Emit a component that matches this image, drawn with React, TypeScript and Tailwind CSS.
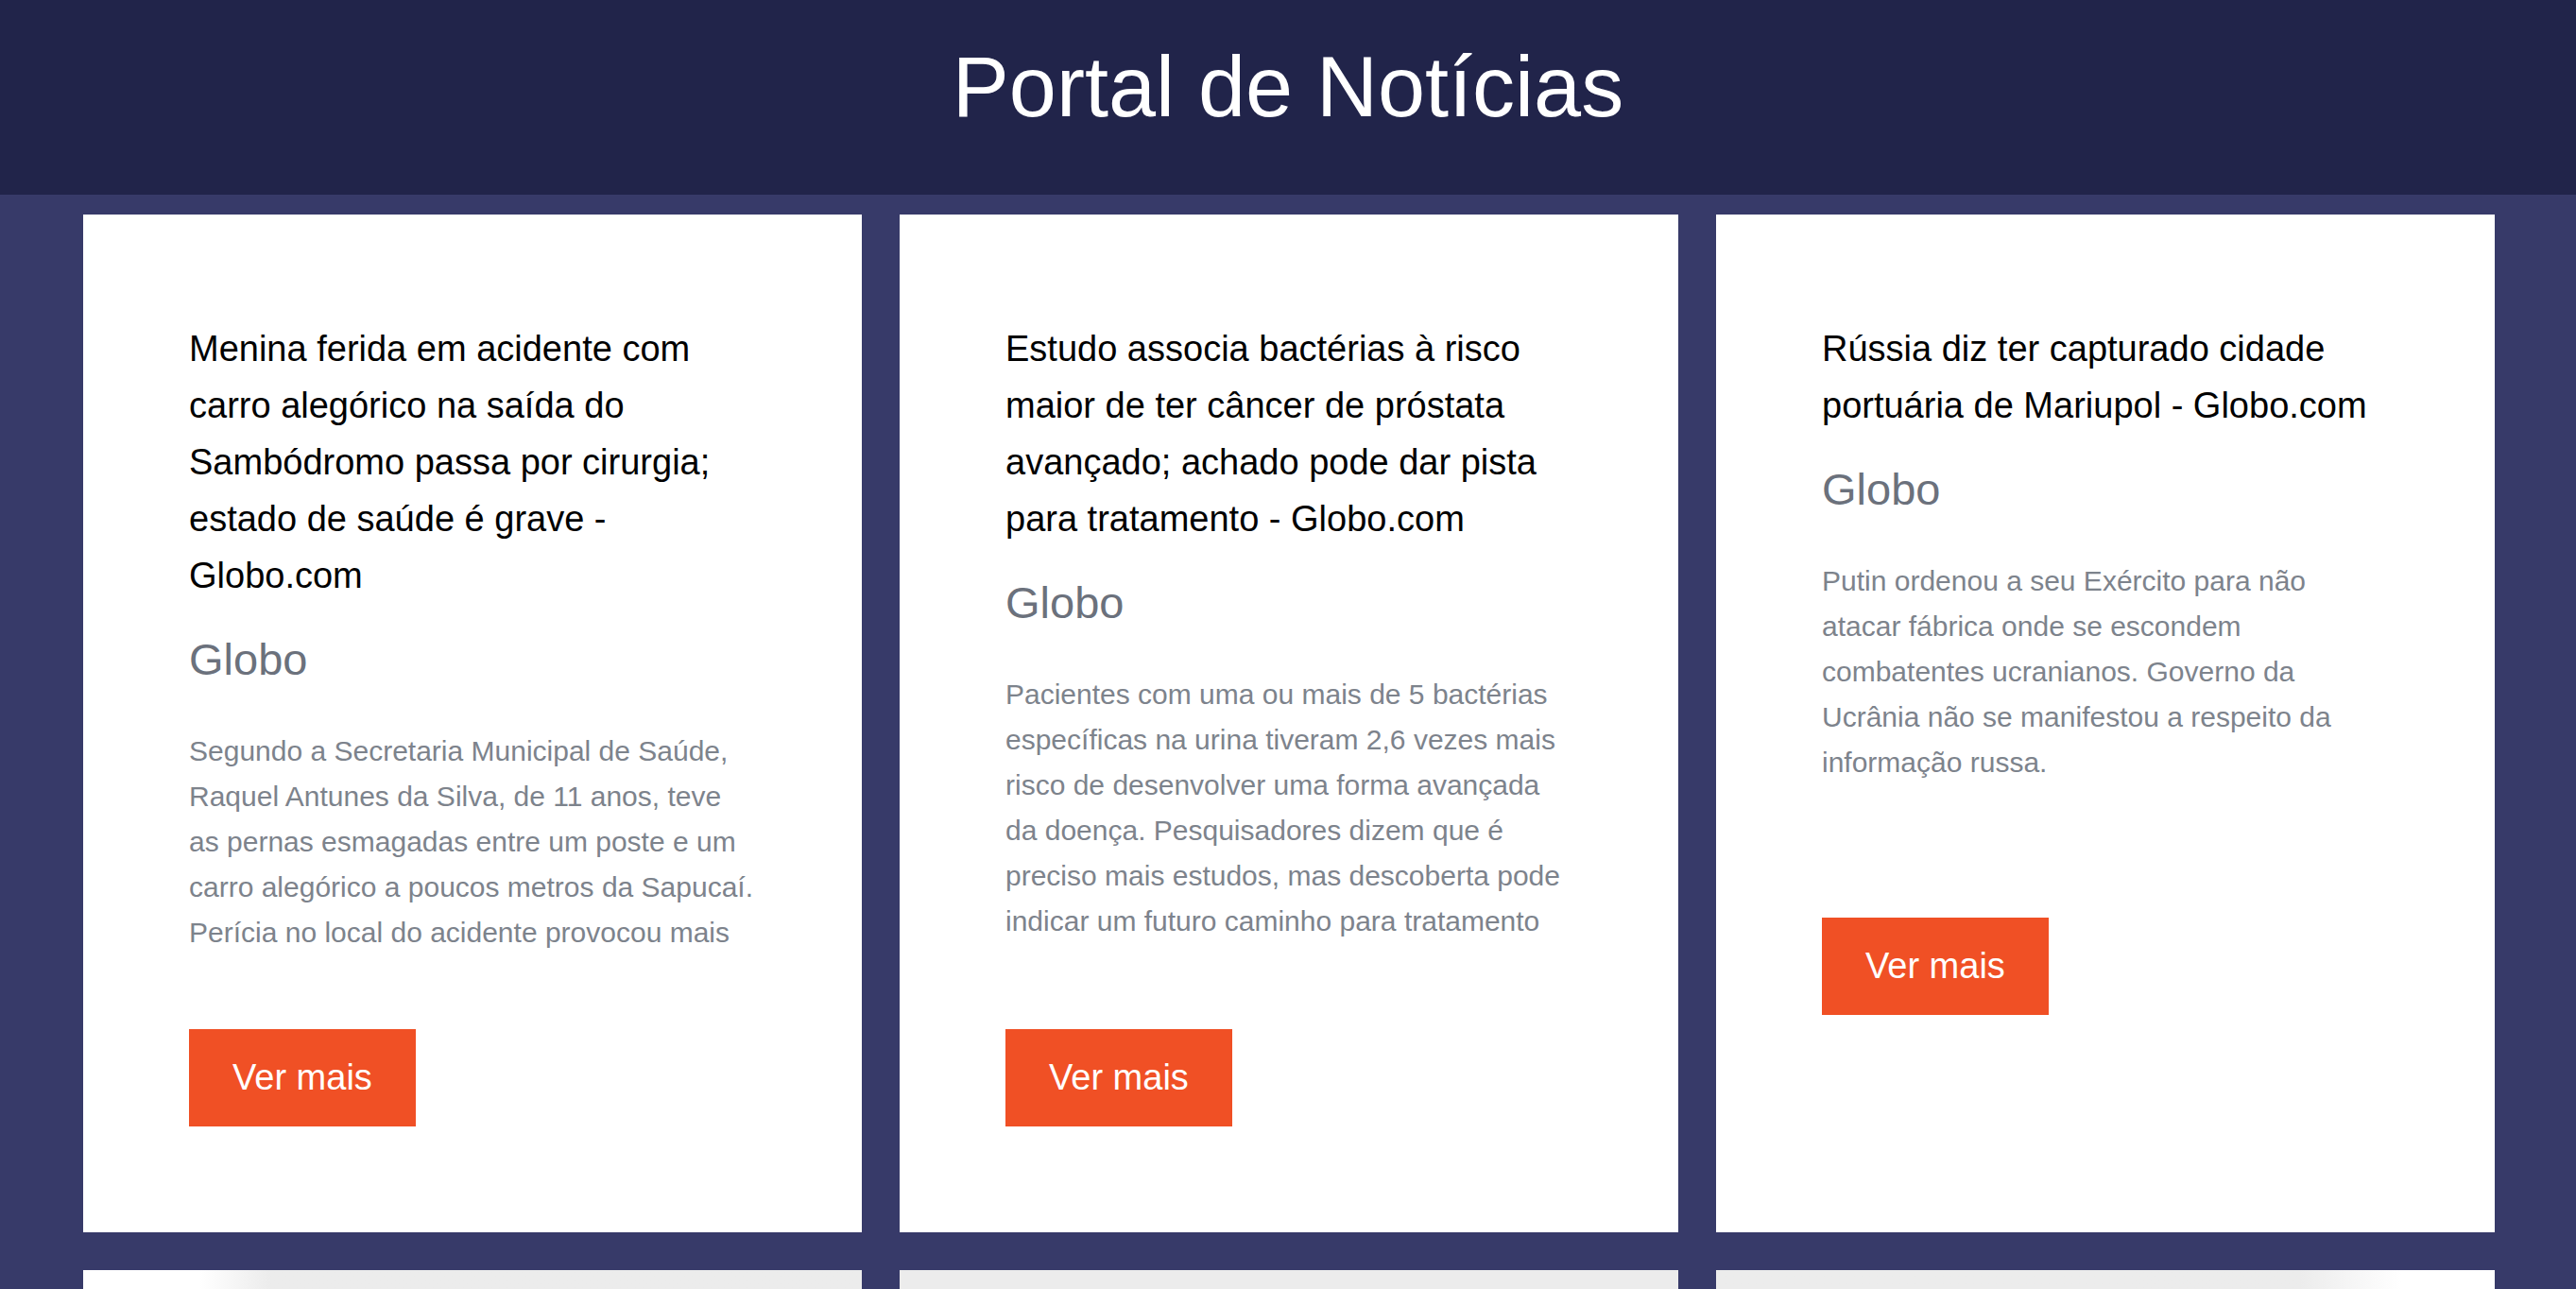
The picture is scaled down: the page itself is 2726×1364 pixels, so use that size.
import React from 'react';

interface Noticia {
    titulo: string;
    fonte: string;
    descricao: string;
    botaoMargem: string;
}

const noticias: Noticia[] = [
    {
        titulo:
            'Menina ferida em acidente com carro alegórico na saída do Sambódromo passa por cirurgia; estado de saúde é grave - Globo.com',
        fonte: 'Globo',
        descricao:
            'Segundo a Secretaria Municipal de Saúde, Raquel Antunes da Silva, de 11 anos, teve as pernas esmagadas entre um poste e um carro alegórico a poucos metros da Sapucaí. Perícia no local do acidente provocou mais',
        botaoMargem: 'mt-[78px]',
    },
    {
        titulo:
            'Estudo associa bactérias à risco maior de ter câncer de próstata avançado; achado pode dar pista para tratamento - Globo.com',
        fonte: 'Globo',
        descricao:
            'Pacientes com uma ou mais de 5 bactérias específicas na urina tiveram 2,6 vezes mais risco de desenvolver uma forma avançada da doença. Pesquisadores dizem que é preciso mais estudos, mas descoberta pode indicar um futuro caminho para tratamento',
        botaoMargem: 'mt-[90px]',
    },
    {
        titulo: 'Rússia diz ter capturado cidade portuária de Mariupol - Globo.com',
        fonte: 'Globo',
        descricao:
            'Putin ordenou a seu Exército para não atacar fábrica onde se escondem combatentes ucranianos. Governo da Ucrânia não se manifestou a respeito da informação russa.',
        botaoMargem: 'mt-[140px]',
    },
];

// segunda fileira: só o topo aparece na tela
const placeholders = [
    'bg-linear-to-r from-white from-[15%] to-[#ececec] to-[24%]',
    'bg-[#ececec]',
    'bg-linear-to-r from-[#ececec] from-[75%] to-white to-[88%]',
];

const NewsCard: React.FC<{ noticia: Noticia }> = ({ noticia }) => (
    <article className="bg-white px-[112px] pt-[112px] pb-[112px] flex flex-col items-start">
        <h2 className="text-[38px] leading-[60px] text-black font-normal">{noticia.titulo}</h2>
        <p className="mt-[29px] text-[47px] leading-[60px] text-[#6b717c]">{noticia.fonte}</p>
        <p className="mt-[43px] text-[30px] leading-[48px] text-[#7d838c]">{noticia.descricao}</p>
        <a
            href="#"
            className={`${noticia.botaoMargem} bg-[#f05025] text-white text-[38px] leading-[43px] px-[46px] py-[30px]`}
        >
            Ver mais
        </a>
    </article>
);

export default function App() {
    return (
        <div
            className="min-h-screen bg-[#373a69]"
            style={{ fontFamily: "'Liberation Sans', Arial, sans-serif" }}
        >
            {/* Cabeçalho */}
            <header className="h-[206px] bg-[#21244a] flex justify-center pt-[47px]">
                <h1 className="text-[90px] leading-none text-white font-normal">Portal de Notícias</h1>
            </header>

            {/* Grade de notícias */}
            <main className="grid grid-cols-3 gap-x-10 gap-y-10 pl-[88px] pr-[86px] pt-[21px] pb-10">
                {noticias.map((n, i) => (
                    <NewsCard key={i} noticia={n} />
                ))}
                {placeholders.map((cls, i) => (
                    <div key={`ph-${i}`} className="bg-white h-[400px]">
                        <div className={`h-[260px] ${cls}`} />
                    </div>
                ))}
            </main>
        </div>
    );
}
